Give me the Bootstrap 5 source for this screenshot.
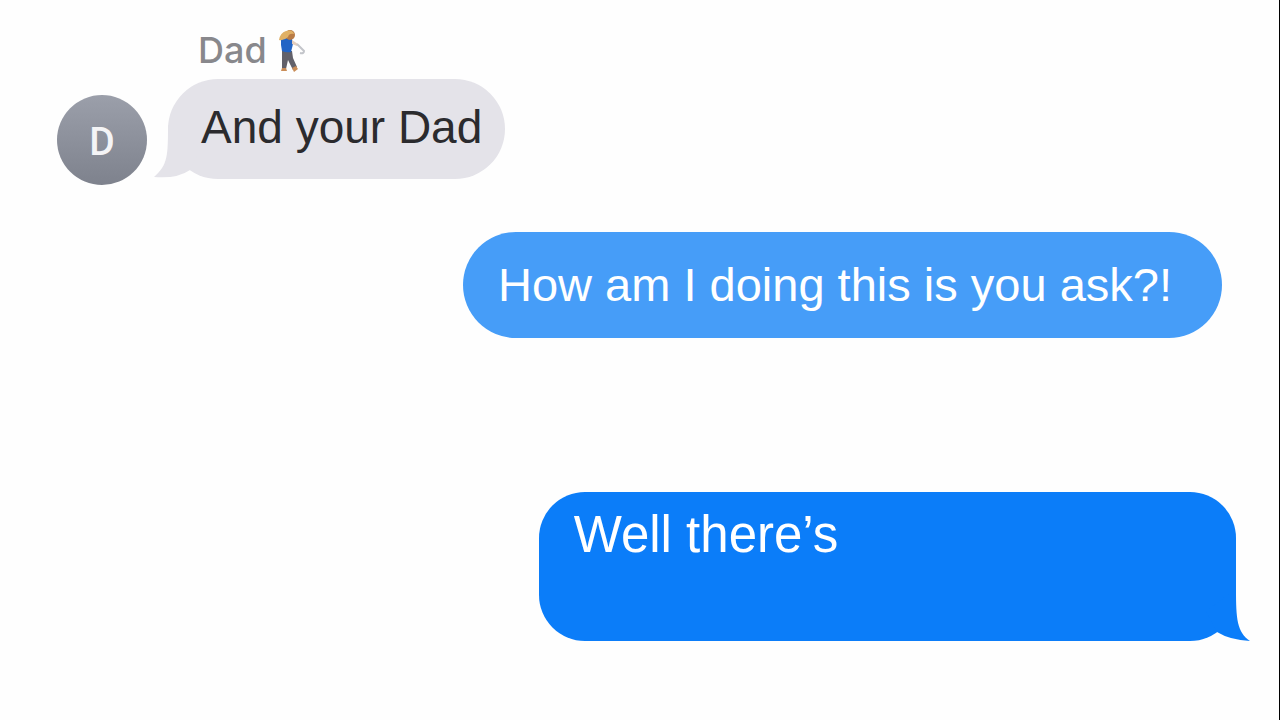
<!DOCTYPE html>
<html lang="en">
<head>
<meta charset="utf-8">
<meta name="viewport" content="width=device-width, initial-scale=1">
<title>Messages</title>
<link href="https://cdn.jsdelivr.net/npm/bootstrap@5.3.0/dist/css/bootstrap.min.css" rel="stylesheet">
<style>
  body { font-family: "Liberation Sans", Arial, sans-serif; background: #fefefe; }
  .chat { border-right: 1px solid #000; padding: 28px 30px 40px 57px; }
  .sender { font: 500 36px/44px Inter, sans-serif; color: #88888c; margin-left: 141px; gap: 10px; }
  .sender svg { width: 32px; height: 44px; }
  .avatar { width: 90px; height: 90px; margin-top: 16px; border-radius: 50%; background: linear-gradient(#9b9faa, #7e828d); color: #f4f4f6; font: 500 39px/94px Roboto, sans-serif; }
  .incoming { gap: 21px; margin-top: 7px; }
  .bubble { position: relative; margin: 0; }
  .bubble-gray { background: #e4e3e9; color: #2b2b2e; border-radius: 50px; padding: 0 23px 4px 33px; font-size: 46px; line-height: 96px; }
  .bubble-light { background: #469df8; color: #fff; border-radius: 53px; padding: 0 50px 0 35px; margin: 47px 27px 0 0; font-size: 47px; line-height: 106px; }
  .bubble-blue { background: #0b7df9; color: #fff; border-radius: 46px; width: 58.5%; min-height: 149px; padding: 13px 35px; margin: 154px 13px 0 0; font-size: 51px; line-height: 60px; }
  .tail { position: absolute; bottom: 0; width: 50px; height: 60px; }
  .tail-left { left: -14px; }
  .tail-right { right: -14px; }
</style>
</head>
<body>
<main class="chat d-flex flex-column min-vh-100">
  <div class="sender d-flex align-items-center">
    <span>Dad</span>
    <svg viewBox="0 0 32 44" role="img" aria-label="Golfer">
      <path d="M5 23 L15 23 L16 30 L20 39 L16 42 L11 32 L9 41 L5 41 Z" fill="#62616a"/>
      <path d="M5 40 L9 40 L10 43 L4 43 Z M15 40 L19 38 L21 41 L17 44 Z" fill="#c98d58"/>
      <path d="M4 12 Q9 8 15 11 L16 16 L14 24 Q9 25 5 23 L4 17 Z" fill="#2264c5"/>
      <path d="M15 12 L21 16 L20 18 L15 16 Z" fill="#e3cdbd"/>
      <path d="M20 16 L27 23 Q27 26 23 25" fill="none" stroke="#c3c5ca" stroke-width="2"/>
      <circle cx="13" cy="7" r="5" fill="#b97b45"/>
      <path d="M2 12 Q3 5 9 3 Q16 1 17 6 Q12 5 11 9 Q7 13 2 12 Z" fill="#e0b065"/>
    </svg>
  </div>
  <div class="incoming d-flex align-items-start">
    <div class="avatar flex-shrink-0 text-center">D</div>
    <p class="bubble bubble-gray">And your Dad
      <svg class="tail tail-left" viewBox="0 0 50 60" aria-hidden="true"><path d="M14 6 C14 36 14 46 0 58 Q23 60 36 51 L46 30 Z" fill="#e4e3e9"/></svg>
    </p>
  </div>
  <p class="bubble bubble-light align-self-end">How am I doing this is you ask?!</p>
  <p class="bubble bubble-blue align-self-end">Well there’s
    <svg class="tail tail-right" viewBox="0 0 50 60" aria-hidden="true"><path d="M36 8 C36 38 37 51 50 60 Q30 59 17 51 L6 30 Z" fill="#0b7df9"/></svg>
  </p>
</main>
<script src="https://cdn.jsdelivr.net/npm/bootstrap@5.3.0/dist/js/bootstrap.bundle.min.js"></script>
</body>
</html>
